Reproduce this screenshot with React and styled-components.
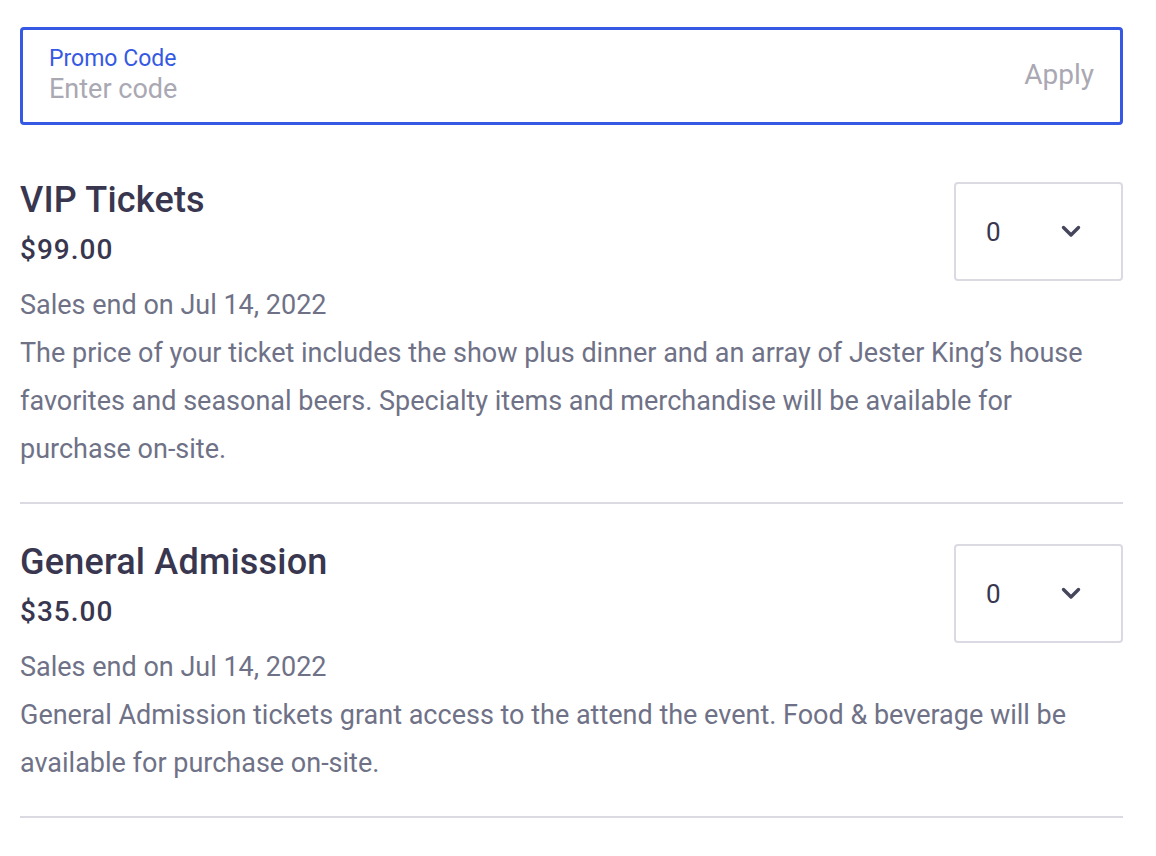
import React from 'react';
import styled, { createGlobalStyle } from 'styled-components';

const GlobalStyle = createGlobalStyle`
	body {
		margin: 0;
		background: #fff;
		font-family: Roboto, 'Noto Sans', sans-serif;
		-webkit-font-smoothing: antialiased;
	}
`;

const Page = styled.div`
	padding: 27px 33px 0 20px;
	display: flex;
	flex-direction: column;
`;

const PromoBox = styled.div`
	box-sizing: border-box;
	height: 98px;
	border: 3px solid #3659e3;
	border-radius: 4px;
	display: flex;
	align-items: flex-start;
	padding: 15px 26px 0 26px;
	margin-bottom: 57px;
`;

const PromoField = styled.div`
	flex: 1;
	display: flex;
	flex-direction: column;
`;

const PromoLabel = styled.span`
	color: #3659e3;
	font-size: 23px;
	line-height: 28px;
`;

const PromoInput = styled.span`
	color: #a9a8b3;
	font-size: 27px;
	line-height: 32px;
`;

const ApplyButton = styled.span`
	margin-top: 14px;
	color: #a9a8b3;
	font-size: 28px;
	line-height: 32px;
`;

const Ticket = styled.div`
	display: flex;
	flex-direction: column;
	padding-bottom: 29px;
	border-bottom: 2px solid #dbdae3;
	margin-bottom: 40px;
`;

const Header = styled.div`
	display: flex;
	align-items: flex-start;
	justify-content: space-between;
	gap: 24px;
`;

const Info = styled.div`
	display: flex;
	flex-direction: column;
	color: #39364f;
`;

const Title = styled.h2`
	margin: 0;
	font-size: 36px;
	line-height: 36px;
	font-weight: 500;
	letter-spacing: 0.2px;
	color: #39364f;
`;

const Price = styled.div`
	margin-top: 16px;
	font-size: 28px;
	line-height: 32px;
	font-weight: 500;
	letter-spacing: 1px;
`;

const Meta = styled.div`
	color: #6f7287;
	font-size: 27px;
	line-height: 48px;
`;

const Description = styled.p`
	margin: 0;
	color: #6f7287;
	font-size: 27px;
	line-height: 48px;
`;

const QuantitySelect = styled.div`
	box-sizing: border-box;
	flex-shrink: 0;
	width: 169px;
	height: 99px;
	border: 2px solid #dbdae3;
	border-radius: 4px;
	display: flex;
	align-items: center;
	justify-content: space-between;
	padding: 0 40px 0 30px;
	color: #39364f;
	font-size: 26px;
`;

const Chevron = () => (
	<svg width="20" height="13" viewBox="0 0 20 13" fill="none">
		<path d="M2.5 2.5 L10 10 L17.5 2.5" stroke="#45465c" strokeWidth="3.4" strokeLinecap="round" strokeLinejoin="round" />
	</svg>
);

const tickets = [
	{
		name: 'VIP Tickets',
		price: '$99.00',
		ends: 'Sales end on Jul 14, 2022',
		text: 'The price of your ticket includes the show plus dinner and an array of Jester King’s house favorites and seasonal beers. Specialty items and merchandise will be available for purchase on-site.'
	},
	{
		name: 'General Admission',
		price: '$35.00',
		ends: 'Sales end on Jul 14, 2022',
		text: 'General Admission tickets grant access to the attend the event. Food & beverage will be available for purchase on-site.'
	}
];

const App = () => (
	<Page>
		<GlobalStyle />
		<PromoBox>
			<PromoField>
				<PromoLabel>Promo Code</PromoLabel>
				<PromoInput>Enter code</PromoInput>
			</PromoField>
			<ApplyButton>Apply</ApplyButton>
		</PromoBox>
		{tickets.map(t => (
			<Ticket key={t.name}>
				<Header>
					<Info>
						<Title>{t.name}</Title>
						<Price>{t.price}</Price>
					</Info>
					<QuantitySelect>
						<span>0</span>
						<Chevron />
					</QuantitySelect>
				</Header>
				<Meta>{t.ends}</Meta>
				<Description>{t.text}</Description>
			</Ticket>
		))}
	</Page>
);

export default App;
